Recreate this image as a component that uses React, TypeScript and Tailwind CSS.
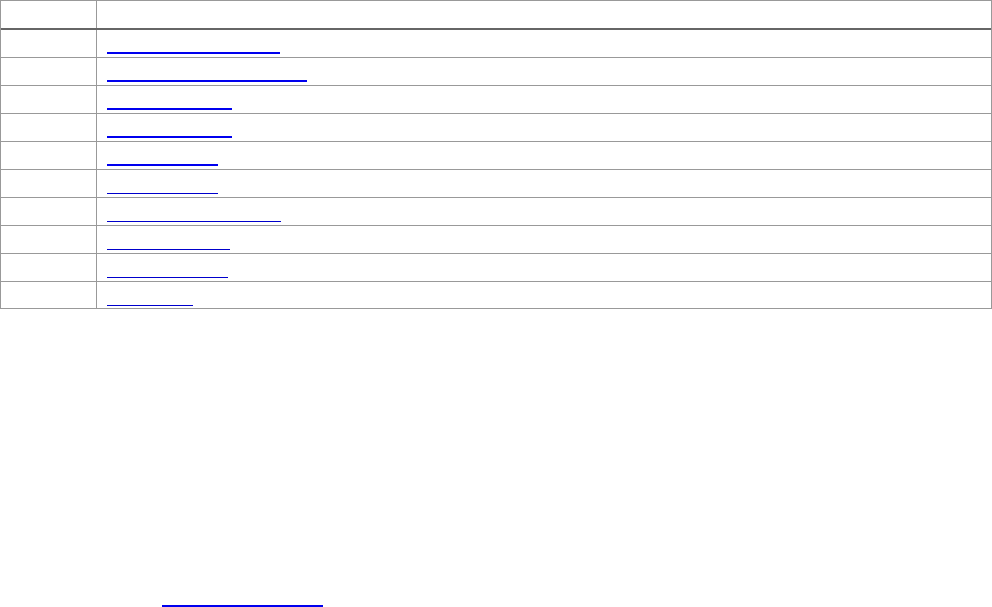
const rows = [173, 200, 125, 125, 111, 111, 174, 123, 121, 86];

function LinkLine({ width, thick }: { width: number; thick?: boolean }) {
  return (
    <a
      href="#"
      className={thick ? "block pt-[22px]" : "block pt-[23px]"}
      style={{ width }}
      aria-label="link"
    >
      <div className={thick ? "h-[2px] w-full bg-[#0000ee]" : "h-px w-full bg-[#0000cc]"} />
    </a>
  );
}

export default function App() {
  return (
    <div className="w-full bg-white font-['Liberation_Sans',sans-serif]">
      <div className="w-full border border-[#999]">
        <div className="flex h-[29px] border-b-2 border-[#666]">
          <div className="w-[96px] border-r border-[#999]" />
          <div className="flex-1" />
        </div>
        {rows.map((w, i) => {
          const last = i === rows.length - 1;
          return (
            <div
              key={i}
              className={last ? "flex h-[26px]" : "flex h-[28px] border-b border-[#999]"}
            >
              <div className="w-[96px] border-r border-[#999]" />
              <div className="flex-1 pl-[10px]">
                <LinkLine width={w} thick={i < 5} />
              </div>
            </div>
          );
        })}
      </div>
      <div className="pl-[162px] pt-[274px]">
        <LinkLine width={161} thick />
      </div>
    </div>
  );
}
